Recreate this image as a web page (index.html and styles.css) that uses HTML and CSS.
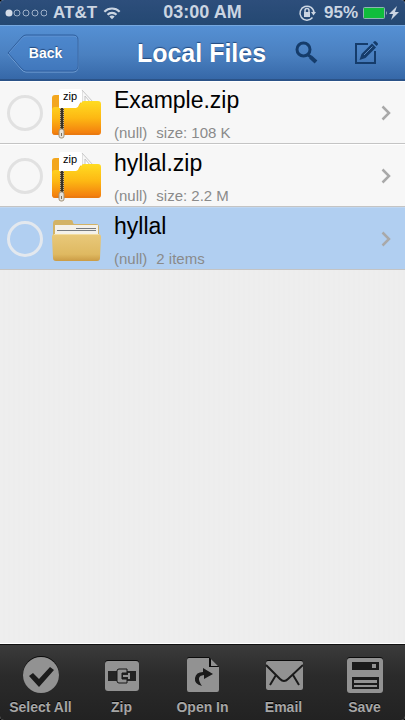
FILE: index.html
```html
<!DOCTYPE html>
<html lang="en">

<head>
    <meta charset="utf-8">
    <meta name="viewport" content="width=device-width, initial-scale=1.0">
    <title>Local Files</title>
    <link rel="stylesheet" href="styles.css">
</head>

<body>
    <!-- shared shapes -->
    <svg class="defs" aria-hidden="true">
        <defs>
            <linearGradient id="orange" x1="0" y1="0" x2="0" y2="1">
                <stop offset="0" stop-color="#ffdc22"></stop>
                <stop offset="0.5" stop-color="#fdb813"></stop>
                <stop offset="1" stop-color="#f2780e"></stop>
            </linearGradient>
            <linearGradient id="tan" x1="0" y1="0" x2="0" y2="1">
                <stop offset="0" stop-color="#e9c97b"></stop>
                <stop offset="0.75" stop-color="#dfb961"></stop>
                <stop offset="1" stop-color="#cb9c45"></stop>
            </linearGradient>
            <symbol id="zip-folder" viewBox="0 0 50 54">
                <path d="M1 12q0-3 3-3h10l4 4h12v34H1z" fill="#f3a61d"></path>
                <path d="M31 4l11 12H31z" fill="#f7f7f7" stroke="#c9c9c9"></path>
                <path d="M34 10l5 6h-5z" fill="#fff" stroke="#c4c4c4"></path>
                <path d="M1 24q0-3 3-3h22q2 0 3-3l1-1q1-2 3-2h14q3 0 3 3v28q0 3-3 3H4q-3 0-3-3z" fill="url(#orange)"></path>
                <path d="M8 5q0-2 2-2h19q2 0 2 2v11q-2 0-3 3-1 3-3 3H8z" fill="#fff"></path>
                <path d="M2 48h46" stroke="#d87b16" opacity="0.6"></path>
                <path d="M11 22v22" stroke="#5c4c32" stroke-width="4"></path>
                <path d="M11 22v22" stroke="#c5b18a" stroke-width="4" stroke-dasharray="1 1"></path>
                <path d="M11 22v22" stroke="#3a3327" stroke-width="2"></path>
                <rect x="8" y="43" width="5" height="9" rx="2" fill="#e6e2da" stroke="#a3937a"></rect>
                <path d="M10.500 47v3" stroke="#7b705f"></path>
            </symbol>
            <symbol id="chevron" viewBox="0 0 10 16">
                <path d="M1.500 1.500L8 8l-6.500 6.500" fill="none" stroke="#a9a9a9" stroke-width="2.500"></path>
            </symbol>
        </defs>
    </svg>

    <div class="screen">
        <div class="status">
            <div class="carrier">
                <svg width="42" height="10" viewBox="0 0 42 10" fill="none" stroke="#9fb1c9">
                    <circle cx="4" cy="5" r="3.500" fill="#d4dce8" stroke="none"></circle>
                    <circle cx="12" cy="5" r="3"></circle>
                    <circle cx="21" cy="5" r="3"></circle>
                    <circle cx="30" cy="5" r="3"></circle>
                    <circle cx="39" cy="5" r="3"></circle>
                </svg>
                <span>AT&amp;T</span>
                <svg width="18" height="14" viewBox="0 0 20 14" fill="none" stroke="#cbd5e2" stroke-width="2.400">
                    <path d="M1.500 5.500a12 12 0 0 1 17 0M5 9a7 7 0 0 1 10 0"></path>
                    <path d="M10 14l-3-3q3-2.500 6 0z" fill="#cbd5e2" stroke="none"></path>
                </svg>
            </div>
            <div class="time">03:00 AM</div>
            <div class="power">
                <svg width="18" height="18" viewBox="0 0 18 18" fill="none" stroke="#cbd5e2" stroke-width="1.500">
                    <path d="M14.500 13.500a7 7 0 1 1 1.500-4.500"></path>
                    <path d="M13 8h5l-2.500 3.500z" fill="#cbd5e2" stroke="none"></path>
                    <rect x="6" y="8" width="6" height="5" fill="#cbd5e2" stroke="none"></rect>
                    <path d="M7 8V6.500a2 2 0 0 1 4 0V8"></path>
                </svg>
                <span>95%</span>
                <svg width="38" height="16" viewBox="0 0 38 16">
                    <rect x="1.500" y="2.500" width="21" height="11" rx="1" fill="#10bd3c" stroke="#8fb5b3"></rect>
                    <path d="M24 6q2 2 0 4z" fill="#8fb5b3"></path>
                    <path d="M35 1l-8 8h4l-2 6 8-8h-4z" fill="#cbd5e2"></path>
                </svg>
            </div>
        </div>

        <header class="nav">
            <button class="back" type="button">
                <svg class="back-shape" width="73" height="40" viewBox="0 0 73 40">
                    <path d="M1 21L15 5q2-2 4-2h47q5 0 5 5v26q0 5-5 5H19q-2 0-4-2z" fill="none" stroke="#78a4d8"></path>
                    <path d="M1 20L15 4q2-2 4-2h47q5 0 5 5v26q0 5-5 5H19q-2 0-4-2z" fill="#4583cc" fill-opacity="0.400" stroke="#2f5f9e"></path>
                </svg>
                <span>Back</span>
            </button>
            <h1>Local Files</h1>
            <div class="nav-actions">
                <button type="button" aria-label="Search">
                    <svg width="24" height="26" viewBox="0 0 24 26" fill="none" stroke="#153c6b">
                        <circle cx="9.500" cy="9.500" r="6.500" stroke-width="3"></circle>
                        <path d="M14 15l3 2" stroke-width="3"></path>
                        <path d="M16.500 17l5.500 5" stroke-width="4"></path>
                    </svg>
                </button>
                <button type="button" aria-label="Edit">
                    <svg width="24" height="26" viewBox="0 0 24 26" fill="none" stroke="#153c6b">
                        <path d="M14 4H2v19h19V11" stroke-width="2"></path>
                        <path d="M5.500 20l2-6L18 3.500l4 4L11.500 18z" fill="#153c6b" stroke="none"></path>
                        <path d="M19 2.500l1-1q1-.800 2 0l1.500 1.500q1 1 0 2l-1 1z" fill="#153c6b" stroke="none"></path>
                        <path d="M10 15l8.500-8.500" stroke="#5c87bb"></path>
                    </svg>
                </button>
            </div>
        </header>

        <ul class="files">
            <li class="file">
                <input type="checkbox" aria-label="Select Example.zip">
                <span class="icon">
                    <svg width="50" height="54"><use href="#zip-folder"></use></svg>
                    <span class="tag">zip</span>
                </span>
                <div class="info">
                    <a href="#">Example.zip</a>
                    <p><span>(null)</span><span>size: 108 K</span></p>
                </div>
                <svg width="10" height="16"><use href="#chevron"></use></svg>
            </li>
            <li class="file">
                <input type="checkbox" aria-label="Select hyllal.zip">
                <span class="icon">
                    <svg width="50" height="54"><use href="#zip-folder"></use></svg>
                    <span class="tag">zip</span>
                </span>
                <div class="info">
                    <a href="#">hyllal.zip</a>
                    <p><span>(null)</span><span>size: 2.2 M</span></p>
                </div>
                <svg width="10" height="16"><use href="#chevron"></use></svg>
            </li>
            <li class="file active">
                <input type="checkbox" aria-label="Select hyllal">
                <span class="icon">
                    <svg width="50" height="54" viewBox="0 0 50 54">
                        <path d="M2 12q0-4 3-4h15q2 0 2 3l1 1h22q3 0 3 3v20H2z" fill="#d3b366"></path>
                        <rect x="4" y="13" width="43" height="12" fill="#f4f1ea"></rect>
                        <path d="M25 16.500h20M6 18.500h39" stroke="#777b80"></path>
                        <path d="M1 25q0-3 3-3h43q3 0 3 3l-1 21q0 3-3 3H5q-3 0-3-3z" fill="url(#tan)"></path>
                        <path d="M3 22.500h45" stroke="#f3dda0"></path>
                    </svg>
                </span>
                <div class="info">
                    <a href="#">hyllal</a>
                    <p><span>(null)</span><span>2 items</span></p>
                </div>
                <svg width="10" height="16"><use href="#chevron"></use></svg>
            </li>
        </ul>

        <footer class="toolbar">
            <button type="button">
                <svg width="38" height="38" viewBox="0 0 38 38">
                    <circle cx="19" cy="18" r="18" fill="#0c0c0c"></circle>
                    <circle cx="19" cy="19" r="18" fill="#929292"></circle>
                    <path d="M7 20l4-3 6 6 11-12 4 3-15 17z" fill="#1b1b1b"></path>
                </svg>
                <span>Select All</span>
            </button>
            <button type="button">
                <svg width="38" height="38" viewBox="0 0 38 38">
                    <rect x="2" y="4" width="34" height="30" rx="3" fill="#0c0c0c"></rect>
                    <rect x="2" y="5" width="34" height="30" rx="3" fill="#929292"></rect>
                    <path d="M5 15h28v10H5z" fill="#242424"></path>
                    <path d="M14 15q0-2 2-2h8v4h-5v6h5v4h-8q-2 0-2-2z" fill="#929292" stroke="#161616"></path>
                    <path d="M20 19h5v-2h2v6h-2v-2h-5z" fill="#929292"></path>
                </svg>
                <span>Zip</span>
            </button>
            <button type="button">
                <svg width="38" height="38" viewBox="0 0 38 38">
                    <path d="M5 1h20l10 10v24H3V3q0-2 2-2z" fill="#0c0c0c"></path>
                    <path d="M5 2h20v9h10v23q0 2-2 2H5q-2 0-2-2V4q0-2 2-2z" fill="#929292"></path>
                    <path d="M27 3l7 7h-7z" fill="#929292"></path>
                    <path d="M19 12l10 6-9 5v-4q-9 1-2 11-8-2-7-8t8-6z" fill="#1b1b1b"></path>
                </svg>
                <span>Open In</span>
            </button>
            <button type="button">
                <svg width="38" height="38" viewBox="0 0 38 38">
                    <rect x="1" y="4" width="37" height="30" rx="2" fill="#0c0c0c"></rect>
                    <rect x="1" y="5" width="37" height="29" rx="2" fill="#929292"></rect>
                    <path d="M1 9l14 14q4 4 8 0L38 9M11 19L5 29M28 19l6 10" fill="none" stroke="#1b1b1b" stroke-width="2"></path>
                </svg>
                <span>Email</span>
            </button>
            <button type="button">
                <svg width="38" height="38" viewBox="0 0 38 38">
                    <rect x="1" y="1" width="36" height="35" rx="3" fill="#0c0c0c"></rect>
                    <rect x="1" y="2" width="36" height="35" rx="3" fill="#929292"></rect>
                    <path d="M6 6h27v8H6zM6 21h27v12H6z" fill="#1b1b1b"></path>
                    <path d="M26 8h4v4h-4zM8 24h23v3H8zM8 29h23v2H8z" fill="#929292"></path>
                </svg>
                <span>Save</span>
            </button>
        </footer>
    </div>
</body>

</html>
```

FILE: styles.css
```css
* {
    box-sizing: border-box;
}

html,
body {
    height: 100%;
    margin: 0;
    padding: 0;
    background-color: #000;
}

body {
    font-family: "Liberation Sans", Arial, Helvetica, sans-serif;
}

svg {
    display: block;
    flex: none;
}

button {
    margin: 0;
    padding: 0;
    border: 0;
    background: none;
    font-family: inherit;
    cursor: pointer;
}

.defs {
    position: absolute;
    width: 0;
    height: 0;
}

.screen {
    display: flex;
    flex-direction: column;
    min-height: 100%;
    border-radius: 4px;
    overflow: hidden;
    background: repeating-linear-gradient(90deg, #eee 0, #eee 3px, #ededed 3px, #ededed 5px);
}

/* status bar */
.status {
    display: grid;
    grid-template-columns: 1fr auto 1fr;
    align-items: center;
    height: 25px;
    padding: 0 5px;
    background: linear-gradient(#2d4e7b, #244872);
    color: #cbd5e2;
    font-size: 17px;
    font-weight: bold;
    line-height: 25px;
}

.time {
    font-size: 18px;
}

.carrier,
.power {
    display: flex;
    align-items: center;
}

.carrier span {
    margin: 0 6px;
}

.power {
    justify-content: flex-end;
}

.power span {
    margin: 0 4px 0 8px;
}

/* title bar */
.nav {
    display: grid;
    grid-template-columns: 1fr auto 1fr;
    align-items: center;
    height: 56px;
    padding: 0 9px 0 7px;
    border-top: 1px solid #76a8df;
    border-bottom: 2px solid #2b5388;
    background: linear-gradient(#5590d4, #4a80c0 55%, #3668a8);
}

.nav h1 {
    margin: 0;
    color: #fff;
    font-size: 25px;
    line-height: 30px;
    text-shadow: 0 -1px 1px #23497d;
}

.back {
    position: relative;
    justify-self: start;
    width: 73px;
    height: 40px;
    padding-left: 4px;
    color: #fff;
    font-size: 14px;
    font-weight: bold;
    text-shadow: 0 -1px 1px #23497d;
}

.back-shape {
    position: absolute;
    top: 0;
    left: 0;
}

.back span {
    position: relative;
}

.nav-actions {
    display: flex;
    justify-content: flex-end;
}

.nav-actions button {
    display: flex;
    align-items: center;
    justify-content: center;
    width: 60px;
    height: 40px;
}

/* file list */
.files {
    flex: 1;
    margin: 0;
    padding: 0;
    border-bottom: 1px solid #fff;
    list-style: none;
}

.file {
    display: flex;
    align-items: center;
    min-height: 63px;
    padding: 0 14px 0 7px;
    border-top: 1px solid #fff;
    border-bottom: 1px solid #c4c4c4;
    background-color: #f7f7f7;
}

.file.active {
    border-top-color: #bfd7f2;
    background-color: #b1cff1;
}

.file input {
    flex: none;
    appearance: none;
    width: 36px;
    height: 36px;
    margin: 0 8px 0 0;
    border: 3px solid #e1e1e1;
    border-radius: 50%;
}

.file.active input {
    border-color: #e3e8ee;
}

.file input:checked {
    background-color: #4a80c0;
}

.icon {
    position: relative;
    flex: none;
    margin-right: 13px;
}

.tag {
    position: absolute;
    top: 4px;
    left: 12px;
    color: #000;
    font-size: 11px;
    line-height: 12px;
}

.info {
    flex: 1;
    min-width: 0;
}

.info a {
    display: block;
    color: #000;
    font-size: 23px;
    line-height: 34px;
    text-decoration: none;
}

.info p {
    display: flex;
    gap: 9px;
    margin: 0;
    padding-top: 6px;
    color: #8a8a8a;
    font-size: 15px;
    line-height: 20px;
}

/* bottom toolbar */
.toolbar {
    display: grid;
    grid-template-columns: repeat(5, 1fr);
    height: 76px;
    border-top: 1px solid #111;
    background: linear-gradient(#3b3b3b, #2b2b2b 40%, #222);
}

.toolbar button {
    display: flex;
    flex-direction: column;
    align-items: center;
    padding-top: 11px;
    color: #a6a6a6;
    font-size: 14px;
    font-weight: bold;
    line-height: 16px;
    white-space: nowrap;
    text-shadow: 0 -1px 0 #000;
}

.toolbar span {
    margin-top: 5px;
}
```
